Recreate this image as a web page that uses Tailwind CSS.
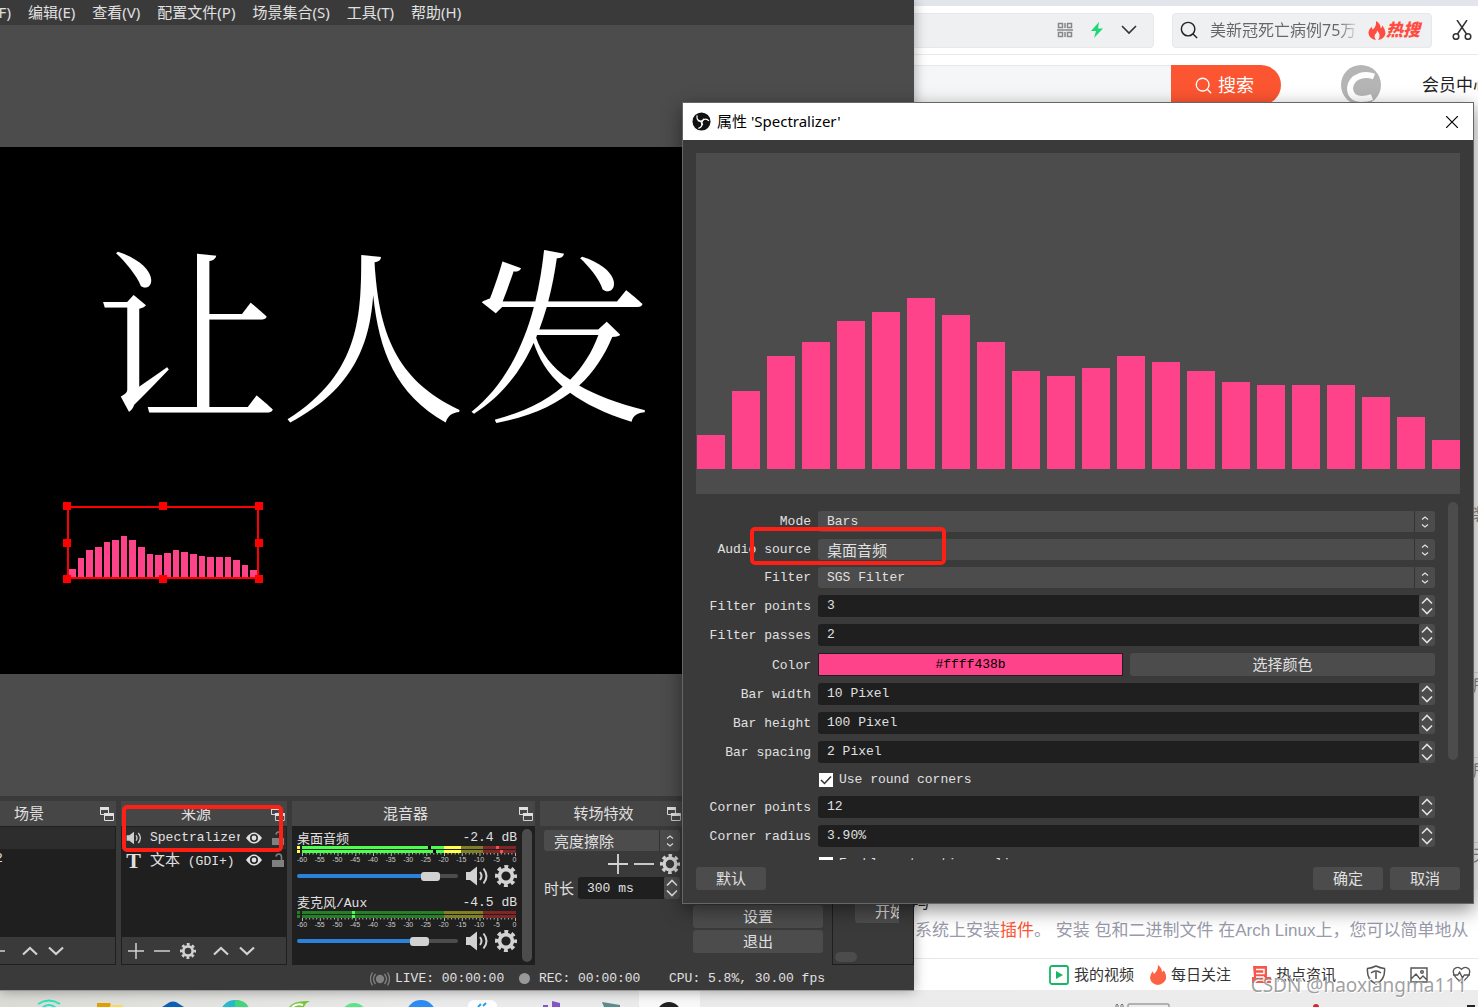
<!DOCTYPE html>
<html lang="zh-CN">
<head>
<meta charset="utf-8">
<title>属性 'Spectralizer'</title>
<script src="https://cdn.jsdelivr.net/npm/@tailwindcss/browser@4"></script>
</head>
<body class="h-screen overflow-hidden bg-white font-['Noto_Sans','Noto_Sans_CJK_SC',sans-serif]">

<svg class="hidden" aria-hidden="true">
  <symbol id="gear" viewBox="0 0 24 24"><g fill="none" stroke="currentColor"><circle cx="12" cy="12" r="7" stroke-width="4"/><circle cx="12" cy="12" r="10" stroke-width="4" stroke-dasharray="4.200 3.654" stroke-dashoffset="2.100"/></g></symbol>
  <symbol id="speaker" viewBox="0 0 24 20"><path fill="currentColor" d="M1 6h4l7-5.500v19L5 14H1z"/><path fill="none" stroke="currentColor" stroke-width="2" d="M15 6q3 4 0 8M18.500 2.500q6 7.500 0 15"/></symbol>
  <symbol id="eye" viewBox="0 0 16 12"><path fill="currentColor" fill-rule="evenodd" d="M0 6Q8-5 16 6Q8 17 0 6zM8 2a4 4 0 1 0 0 8a4 4 0 1 0 0-8z"/><circle cx="8" cy="6" r="2.400" fill="currentColor"/></symbol>
  <symbol id="lock" viewBox="0 0 12 15"><path fill="currentColor" d="M0 7h12v7H0z"/><path fill="none" stroke="currentColor" stroke-width="1.600" d="M4 3.500Q4.500 1 6.500 1Q9.500 1 9.500 4v3"/></symbol>
  <symbol id="float" viewBox="0 0 14 14"><path fill="none" stroke="currentColor" d="M.5 .5h8v7h-8zM4.500 6.500h9v7h-9z"/><path fill="currentColor" d="M0 0h9v3H0zM4 6h10v3H4z"/><path fill="#464646" d="M5 9h8v4H5z"/></symbol>
  <symbol id="up" viewBox="0 0 16 10"><path fill="none" stroke="currentColor" stroke-width="2.200" d="M1 8.500L8 2l7 6.500"/></symbol>
  <symbol id="down" viewBox="0 0 16 10"><path fill="none" stroke="currentColor" stroke-width="2.200" d="M1 1.500L8 8l7-6.500"/></symbol>
  <symbol id="plus" viewBox="0 0 16 16"><path fill="none" stroke="currentColor" stroke-width="1.500" d="M0 8h16M8 0v16"/></symbol>
  <symbol id="minus" viewBox="0 0 16 16"><path fill="none" stroke="currentColor" stroke-width="1.500" d="M0 8h16"/></symbol>
  <symbol id="combo" viewBox="0 0 8 12"><path fill="none" stroke="currentColor" stroke-width="1.200" d="M1 3.500L4 1l3 2.500M1 8.500L4 11l3-2.500"/></symbol>
  <symbol id="spin" viewBox="0 0 12 18"><path fill="none" stroke="currentColor" stroke-width="1.600" d="M1 6.500L6 1.500l5 5M1 11.500l5 5l5-5"/></symbol>
  <symbol id="search" viewBox="0 0 20 20"><g fill="none" stroke="currentColor" stroke-width="1.600"><circle cx="9" cy="9" r="7.500"/><path d="M14.500 14.500L19 19"/></g></symbol>
  <symbol id="flame" viewBox="0 0 18 20"><path fill="currentColor" d="M8 0Q13 3 13 8Q14.500 7 14.500 4.500Q18 9 18 13Q17 19 10 20Q14 15 9 10Q9 13 7 14Q5.500 17 8 20Q1 19 0 13Q0 9 3.500 6Q3.500 8 4.500 9Q8.500 6 8 0z"/></symbol>
  <symbol id="obs" viewBox="0 0 20 20"><circle cx="10" cy="10" r="9.500" fill="#111"/><g fill="none" stroke="#fff" stroke-width="1.300"><path id="blade" d="M5.500 3.500Q4 8 8.500 9.500Q11.500 10 12.500 7"/><use href="#blade" transform="rotate(120 10 10)"/><use href="#blade" transform="rotate(240 10 10)"/></g></symbol>
</svg>

<div class="relative flex h-full flex-col overflow-hidden">

  <!-- Browser behind -->
  <div class="flex min-h-0 flex-1 flex-col bg-white">
    <div class="h-[6px] shrink-0 bg-[#e2e5ea]"></div>
    <header class="flex h-[49px] shrink-0 items-center justify-end border-b border-[#e9eaec]">
      <div class="flex h-[35px] w-[320px] items-center justify-end gap-4 rounded border border-[#e6e8ea] bg-[#eff0f2] pr-4">
        <svg class="h-4 w-4 text-[#888]" viewBox="0 0 16 16" fill="none" stroke="currentColor" stroke-width="1.500"><path d="M1.500 1.500h4v4h-4zM1.500 10.500h4v4h-4zM10.500 1.500h4v4h-4zM10.500 10.500h4v4h-4zM0 8h16M8 1v5M8 10v5"/></svg>
        <svg class="h-4 w-4" viewBox="0 0 16 16"><path fill="#20d776" d="M10 0L2 9h5l-2 7L14 6.500H9z"/></svg>
        <svg class="h-[10px] w-4 text-[#333]" viewBox="0 0 16 10"><path fill="none" stroke="currentColor" stroke-width="1.600" d="M1 1l7 7l7-7"/></svg>
      </div>
      <div class="ml-[18px] mr-5 flex h-[35px] w-[260px] items-center rounded border border-[#e6e8ea] bg-[#eff0f2] px-[7px]">
        <svg class="h-[18px] w-[18px] shrink-0 text-[#222]"><use href="#search"/></svg>
        <input aria-label="搜索热点" value="美新冠死亡病例75万" class="ml-3 w-[150px] bg-transparent bg-clip-text bg-linear-to-r from-[#666] from-85% to-transparent text-base text-transparent">
        <svg class="ml-2 h-[19px] w-[18px] shrink-0 text-[#ff4b40]"><use href="#flame"/></svg>
        <a href="#" class="whitespace-nowrap text-[17px] font-black italic text-[#ff4b40]">热搜</a>
      </div>
      <svg class="mr-[6px] h-5 w-5 shrink-0 text-[#333]" viewBox="0 0 20 20" fill="none" stroke="currentColor" stroke-width="1.500"><circle cx="4" cy="16.500" r="2.800"/><circle cx="16" cy="16.500" r="2.800"/><path d="M5.500 14L15 0M14.500 14L5 0"/></svg>
    </header>
    <div class="mt-[10px] flex h-[40px] shrink-0 items-center justify-end">
      <div class="h-[40px] w-[300px] border-t border-[#e6e7ea] bg-[#f5f6f7]"></div>
      <button class="flex h-[40px] w-[110px] items-center justify-center gap-[6px] rounded-r-full bg-[#fc5531] pr-[3px] text-lg text-white"><svg class="h-[17px] w-[17px]"><use href="#search"/></svg>搜索</button>
      <svg class="ml-[60px] h-10 w-10" viewBox="0 0 40 40"><circle cx="20" cy="20" r="20" fill="#b5b5b5"/><path fill="none" stroke="#fff" stroke-width="6" d="M33 11.500Q26 9 19 11Q10 14 9 23Q9 33 20 34Q26 34 31 32"/></svg>
      <a href="#" class="ml-[41px] w-14 overflow-hidden whitespace-nowrap text-[17px] text-[#222]">会员中心</a>
    </div>
    <main class="flex flex-1 flex-col justify-end overflow-hidden bg-[#fafafa]">
      <aside class="mb-[22px] flex w-[5px] flex-col gap-[60px] self-end overflow-hidden whitespace-nowrap text-base leading-6 text-[#888]">
        <span class="mb-[86px]">装</span><span class="border-t border-[#ddd]">所</span><span class="border-t border-[#ddd]">所</span><span class="border-t border-[#ddd]">天</span>
      </aside>
      <div class="flex flex-col items-end bg-white pb-[13px] font-['Liberation_Sans','Noto_Sans_CJK_SC',sans-serif] text-[17px] leading-7 text-[#999aaa]">
        <div class="w-[566px] text-[#222]">吗</div>
        <p class="w-[563px] overflow-hidden whitespace-nowrap">系统上安装<a href="#" class="text-[#fc5531]">插件</a>。 安装 包和二进制文件 在Arch Linux上，您可以简单地从</p>
      </div>
    </main>
    <nav class="flex h-[32px] shrink-0 items-center justify-end overflow-hidden whitespace-nowrap border-t border-[#e8e8e8] bg-white text-[15px] text-[#333]">
      <a href="#" class="flex items-center gap-[5px]"><svg class="h-5 w-5" viewBox="0 0 20 20"><rect x="1" y="1" width="18" height="18" rx="2" fill="none" stroke="#18b566" stroke-width="1.800"/><path fill="#18b566" d="M7 6l7 4l-7 4z"/></svg>我的视频</a>
      <a href="#" class="ml-4 flex items-center gap-[5px]"><svg class="h-5 w-4" viewBox="0 0 16 20"><path fill="#fb6344" d="M8 0Q12 3 12 7L14 5.500Q17 11 16 14Q14 19 8 20Q1 19 0 13Q0 9 3 6Q3 8 4 9Q8 6 8 0z"/></svg>每日关注</a>
      <a href="#" class="ml-5 flex items-center gap-[5px]"><svg class="h-5 w-5" viewBox="0 0 20 20"><path fill="#f9564b" d="M2 1h14v11h4v6H1V12h2z"/><path stroke="#fff" stroke-width="1.500" fill="none" d="M5 4.500h8v4H5M5 12h8M5 15h4M13 12v5"/></svg>热点资讯</a>
      <span class="ml-[30px] mr-[7px] flex items-center gap-6 text-[#555]">
        <svg class="h-5 w-5" viewBox="0 0 20 20" fill="none" stroke="currentColor" stroke-width="1.500"><path d="M10 1Q14 3 18.500 3.500Q19.500 15 10 19Q.5 15 1.500 3.500Q6 3 10 1zM5 8Q10 4 15 8M10 7v7"/></svg>
        <svg class="h-4 w-[18px]" viewBox="0 0 18 16" fill="none" stroke="currentColor" stroke-width="1.400"><path d="M1 1h16v14H1zM1 12l5-5l4 5l3-3l4 4"/><circle cx="12" cy="5" r="1.300"/></svg>
        <svg class="h-[18px] w-[19px]" viewBox="0 0 20 18" fill="none" stroke="currentColor" stroke-width="1.400"><path d="M10 3Q14-1 18 3Q21 9 10 17Q-1 9 2 3Q6-1 10 3zM1 9h5l2-3l3 6l2-3h6"/></svg>
      </span>
    </nav>
  </div>

  <!-- Taskbar -->
  <footer class="flex h-[17px] shrink-0 justify-between overflow-hidden bg-linear-to-r from-[#dcdcd6] via-[#ebebeb] via-30% to-[#ececec]">
    <svg class="h-[17px] w-[720px] shrink-0" viewBox="0 0 720 17">
      <g fill="none" stroke="#2de3c0" stroke-width="2"><path d="M38 14Q49 7 60 14M42 18Q49 12 56 18"/></g>
      <path fill="#e2a007" d="M97 13h13l2 4H97z"/><path fill="#ffd75e" d="M110 15h13v2h-13z"/>
      <path fill="#0c5fb8" d="M162 17l8-5q3-1 6 0l8 5z"/>
      <circle cx="235" cy="25" r="15" fill="#2bb9d0"/><path fill="#45d67b" d="M235 10q11 0 14 8h-14z"/>
      <path fill="#77c639" d="M289 17Q294 10 310 11Q305 13 304 17z"/><path stroke="#fff" stroke-width="2" fill="none" d="M292 17q5-4 11-2"/>
      <circle cx="354" cy="26" r="13" fill="#55e884"/><circle cx="421" cy="25" r="15" fill="#2f8cf5"/>
      <rect x="468" y="10" width="29" height="20" rx="6" fill="#fff"/><path stroke="#2aa0e8" stroke-width="2" d="M478 17l3-3M483 16l3-3"/>
      <path fill="#8356c4" d="M543 15h5v2h-5zM552 11l8 2v4h-8z"/><path fill="#5c8c8c" d="M602 12l18 3v2h-16z"/>
      <path fill="#f9f9f9" d="M639 0h61v17h-61z"/><circle cx="669" cy="24" r="12" fill="#222"/>
    </svg>
    <svg class="h-[17px] w-[400px] shrink-0" viewBox="0 0 400 17"><path fill="none" stroke="#777" d="M38 17v-2q1-2 2 0v2M43 17v-2q1-2 2 0v2M50 17v-2q0-1 1-1h39q1 0 1 1v2"/><circle cx="238" cy="17" r="3" fill="#d9252b"/><path fill="#222" d="M389 15h8v2h-8z"/></svg>
  </footer>

  <!-- OBS main window -->
  <section class="absolute bottom-4 left-0 top-0 flex w-[914px] flex-col border-b border-[#9a9a9a] bg-[#3a3a3a] text-[#e1e0e1] shadow-[0_0_12px_rgba(0,0,0,0.35)]">
    <nav class="flex h-[25px] shrink-0 items-center gap-[17px] overflow-hidden whitespace-nowrap text-[15px]">
      <a href="#" class="flex w-[11px] justify-end">(F)</a><a href="#">编辑(E)</a><a href="#">查看(V)</a><a href="#">配置文件(P)</a><a href="#">场景集合(S)</a><a href="#">工具(T)</a><a href="#">帮助(H)</a>
    </nav>
    <div class="flex min-h-0 flex-1 flex-col justify-center bg-[#4c4c4c]">
      <div class="relative h-[527px] overflow-hidden bg-black">
        <div class="absolute left-[94px] top-[76px] whitespace-nowrap font-['Noto_Serif_CJK_SC','Noto_Sans_CJK_SC',serif] text-[186px] font-normal leading-[210px] text-white">让人发</div>
        <div class="absolute left-[67px] top-[359px] h-[73px] w-48 border-2 border-[#f00]">
          <div data-bars class="flex h-full items-end gap-[2px]"></div>
          <i class="absolute -left-[6px] -top-[6px] h-2 w-2 bg-[#f00]"></i><i class="absolute left-[90px] -top-[6px] h-2 w-2 bg-[#f00]"></i><i class="absolute -right-[6px] -top-[6px] h-2 w-2 bg-[#f00]"></i>
          <i class="absolute -left-[6px] top-[31px] h-2 w-2 bg-[#f00]"></i><i class="absolute -right-[6px] top-[31px] h-2 w-2 bg-[#f00]"></i>
          <i class="absolute -left-[6px] -bottom-[6px] h-2 w-2 bg-[#f00]"></i><i class="absolute left-[90px] -bottom-[6px] h-2 w-2 bg-[#f00]"></i><i class="absolute -right-[6px] -bottom-[6px] h-2 w-2 bg-[#f00]"></i>
        </div>
      </div>
    </div>

    <div class="flex h-[169px] shrink-0 gap-[5px] pt-[5px] font-['Noto_Sans_CJK_SC',sans-serif] text-[15px]">
      <!-- Scenes -->
      <div class="flex w-[116px] flex-col">
        <h2 class="flex h-[25px] items-center bg-[#464646] pl-[14px] pr-[2px]">场景<svg class="ml-auto h-[14px] w-[14px]"><use href="#float"/></svg></h2>
        <div class="flex flex-1 flex-col border border-l-0 border-[#1f1f1f] bg-[#1f1f1f] font-['Liberation_Mono'] text-[13px]"><div class="h-[22px] bg-[#2d2d2d]"></div><div class="h-[22px] overflow-hidden"><span class="-ml-[5px]">2</span></div>
          <div class="mt-auto flex h-[27px] items-center gap-[10px] bg-[#3a3a3a] text-[#d2d2d2]"><svg class="h-4 w-[5px]" viewBox="0 0 5 16"><path stroke="currentColor" stroke-width="1.500" d="M0 8h5"/></svg><svg class="ml-[7px] h-[10px] w-4"><use href="#up"/></svg><svg class="h-[10px] w-4"><use href="#down"/></svg></div>
        </div>
      </div>
      <!-- Sources -->
      <div class="flex w-[166px] flex-col">
        <h2 class="flex h-[25px] items-center bg-[#464646] pr-[2px]"><span class="w-[152px] text-center">来源</span><svg class="ml-auto h-[14px] w-[14px]"><use href="#float"/></svg></h2>
        <div class="flex flex-1 flex-col border border-[#1f1f1f] bg-[#1f1f1f]">
          <div class="flex h-[22px] items-center bg-[#2d2d2d] pl-1 pr-[2px]"><svg class="h-[14px] w-4 text-[#ccc]"><use href="#speaker"/></svg><span class="ml-2 w-[90px] overflow-hidden font-['Liberation_Mono'] text-[13px] leading-5">Spectralizer</span><svg class="ml-[6px] h-3 w-4"><use href="#eye"/></svg><svg class="ml-auto h-[15px] w-3 text-[#808080]"><use href="#lock"/></svg></div>
          <div class="flex h-[22px] items-center pl-[3px] pr-[2px]"><span class="w-[17px] text-center font-['Liberation_Serif'] text-[22px] font-bold">T</span><span class="ml-2 w-[90px] whitespace-nowrap leading-5">文本<span class="font-['Liberation_Mono'] text-[13px]"> (GDI+)</span></span><svg class="ml-[6px] h-3 w-4"><use href="#eye"/></svg><svg class="ml-auto h-[15px] w-3 text-[#808080]"><use href="#lock"/></svg></div>
          <div class="mt-auto flex h-[27px] items-center gap-[10px] bg-[#3a3a3a] pl-[6px] text-[#d2d2d2]"><svg class="h-4 w-4"><use href="#plus"/></svg><svg class="h-4 w-4"><use href="#minus"/></svg><svg class="h-4 w-4"><use href="#gear"/></svg><svg class="ml-[7px] h-[10px] w-4"><use href="#up"/></svg><svg class="h-[10px] w-4"><use href="#down"/></svg></div>
        </div>
      </div>
      <!-- Mixer -->
      <div class="flex w-[243px] flex-col">
        <h2 class="flex h-[25px] items-center bg-[#464646] pr-[2px]"><span class="w-[229px] text-center">混音器</span><svg class="ml-auto h-[14px] w-[14px]"><use href="#float"/></svg></h2>
        <div class="flex flex-1 justify-between bg-[#1f1f1f] pl-[5px] pr-[3px] pt-[3px]">
          <div class="w-[220px]">
            <div class="h-[65px]">
              <div class="flex h-[17px] items-center justify-between leading-4"><span class="text-[13px]">桌面音频</span><span class="font-['Liberation_Mono'] text-[13px]">-2.4 dB</span></div>
              <svg data-meter="live" class="h-[19px] w-[220px]" viewBox="0 0 220 19">
                <path fill="#ffff4c" d="M0 0h3v3H0zM0 4h3v3H0zM147 0h17v3h-17zM147 4h17v3h-17z"/><path fill="#4cff4c" d="M5 0h142v3H5zM5 4h142v3H5z"/><path fill="#7f7f26" d="M164 0h22v3h-22zM164 4h22v3h-22z"/><path fill="#7f2626" d="M186 0h33v3h-33zM186 4h33v3h-33z"/><path d="M131 0h3v3h-3zM136 4h3v3h-3z"/><path fill="#ff4c4c" d="M199 0h3v3h-3zM203 4h3v3h-3z"/>
              </svg>
              <div class="flex h-[22px] items-center justify-between"><div class="relative flex h-2 w-[161px] items-center"><span class="h-1 w-full rounded-full bg-linear-to-r from-[#2a82da] from-80% to-[#4c4c4c] to-80%"></span><input type="range" aria-label="桌面音频" value="85" class="absolute inset-0 w-full opacity-0"><span class="absolute left-[124px] h-[9px] w-[19px] rounded-[3px] bg-[#d2d2d2]"></span></div><svg class="h-5 w-6 text-[#d2d2d2]"><use href="#speaker"/></svg><svg class="h-[22px] w-[22px] text-[#d2d2d2]"><use href="#gear"/></svg></div>
            </div>
            <div class="h-[65px]">
              <div class="flex h-[17px] items-center justify-between leading-4"><span class="text-[13px]">麦克风<span class="font-['Liberation_Mono']">/Aux</span></span><span class="font-['Liberation_Mono'] text-[13px]">-4.5 dB</span></div>
              <svg data-meter="idle" class="h-[19px] w-[220px]" viewBox="0 0 220 19">
                <path fill="#267f26" d="M0 0h3v3H0zM0 4h3v3H0zM5 0h142v3H5zM5 4h142v3H5z"/><path fill="#7f7f26" d="M147 0h39v3h-39zM147 4h39v3h-39z"/><path fill="#7f2626" d="M186 0h33v3h-33zM186 4h33v3h-33z"/><path fill="#4cff4c" d="M55 0h3v3h-3zM55 4h3v3h-3z"/>
              </svg>
              <div class="flex h-[22px] items-center justify-between"><div class="relative flex h-2 w-[161px] items-center"><span class="h-1 w-full rounded-full bg-linear-to-r from-[#2a82da] from-75% to-[#4c4c4c] to-75%"></span><input type="range" aria-label="麦克风" value="78" class="absolute inset-0 w-full opacity-0"><span class="absolute left-[113px] h-[9px] w-[19px] rounded-[3px] bg-[#d2d2d2]"></span></div><svg class="h-5 w-6 text-[#d2d2d2]"><use href="#speaker"/></svg><svg class="h-[22px] w-[22px] text-[#d2d2d2]"><use href="#gear"/></svg></div>
            </div>
          </div>
          <div class="mb-[3px] w-[10px] rounded-full bg-[#4c4c4c]"></div>
        </div>
      </div>
      <!-- Transitions -->
      <div class="flex w-[148px] flex-col">
        <h2 class="flex h-[25px] items-center bg-[#464646] pr-[7px]"><span class="w-[129px] text-center">转场特效</span><svg class="ml-auto h-[14px] w-[14px]"><use href="#float"/></svg></h2>
        <div class="flex flex-col px-1 pt-1">
          <div class="relative w-[136px]"><select aria-label="转场特效" class="block h-[21px] w-full appearance-none rounded-[3px] bg-[#4c4c4c] pl-[10px] leading-5"><option>亮度擦除</option></select><span class="pointer-events-none absolute inset-y-0 right-0 flex w-[21px] items-center justify-center border-l border-[#333]"><svg class="h-3 w-2"><use href="#combo"/></svg></span></div>
          <div class="flex h-[26px] w-[136px] items-center justify-end gap-[6px] text-[#d2d2d2]"><svg class="h-5 w-5"><use href="#plus"/></svg><svg class="h-5 w-5"><use href="#minus"/></svg><svg class="h-5 w-5"><use href="#gear"/></svg></div>
          <label class="flex h-[22px] w-[136px] items-center"><span class="w-[34px] whitespace-nowrap">时长</span><input value="300 ms" class="h-[22px] w-[86px] rounded-l-[3px] bg-[#1f1f1f] pl-[9px] font-['Liberation_Mono'] text-[13px]"><span class="flex h-[22px] w-4 items-center justify-center rounded-[3px] bg-[#4c4c4c]"><svg class="h-[18px] w-3"><use href="#spin"/></svg></span></label>
        </div>
      </div>
      <!-- Controls -->
      <div class="flex w-[130px] flex-col justify-end gap-[2px] pb-3"><button class="h-[23px] rounded-[3px] bg-[#4c4c4c]">设置</button><button class="h-[23px] rounded-[3px] bg-[#4c4c4c]">退出</button></div>
      <div class="ml-1 flex flex-1 flex-col justify-end border border-[#1f1f1f] pb-[2px]"><button class="ml-[22px] h-[23px] w-11 overflow-hidden whitespace-nowrap rounded-l-[3px] bg-[#4c4c4c] pl-5 text-left">开始</button><div class="ml-[2px] mt-[29px] h-[10px] w-[22px] rounded-full bg-[#4c4c4c]"></div></div>
    </div>

    <div class="flex h-[25px] shrink-0 items-center pl-[370px] pt-[2px] font-['Liberation_Mono'] text-[13px] whitespace-pre">
      <svg class="h-4 w-[20px] text-[#808080]" viewBox="0 0 20 16" fill="none" stroke="currentColor" stroke-width="1.300"><circle cx="10" cy="8" r="3.500" fill="currentColor"/><path d="M5.500 3q-4 5 0 10M2.500 1.500q-4 6.500 0 13M14.500 3q4 5 0 10M17.500 1.500q4 6.500 0 13"/></svg><span class="ml-[5px] w-[124px]">LIVE: 00:00:00</span><i class="h-[11px] w-[11px] rounded-full bg-[#999]"></i><span class="ml-[9px] w-[130px]">REC: 00:00:00</span><span>CPU: 5.8%, 30.00 fps</span>
    </div>
  </section>

  <!-- Properties dialog -->
  <section role="dialog" aria-labelledby="dlg" class="absolute right-1 top-[102px] flex w-[792px] flex-col border border-[#666] bg-[#3a3a3a] text-[#e1e0e1] shadow-[0_6px_18px_rgba(0,0,0,0.45)]">
    <header class="flex h-[37px] items-center bg-white pl-[9px] pr-[15px] text-black"><svg class="h-[19px] w-[19px]"><use href="#obs"/></svg><h1 id="dlg" class="ml-[6px] text-[15px]">属性 'Spectralizer'</h1><button aria-label="关闭" class="ml-auto"><svg class="h-3 w-3" viewBox="0 0 12 12"><path stroke="#000" stroke-width="1.200" d="M0 0l12 12M12 0L0 12"/></svg></button></header>
    <div class="flex flex-col px-[13px] py-[13px] font-['Noto_Sans_CJK_SC',sans-serif] text-[15px]">
      <div class="h-[341px] bg-[#4c4c4c]"><div data-bars class="flex h-[316px] items-end gap-[7px] pl-px"></div></div>
      <div class="flex h-[366px] justify-between overflow-hidden pr-[2px]">
        <form id="props" class="grid flex-1 grid-cols-[115px_1fr] content-start gap-x-[7px] gap-y-[7px] pr-[13px] pt-[17px] font-['Liberation_Mono',monospace] text-[13px]"></form>
        <div class="mt-2 h-[258px] w-[10px] rounded-full bg-[#4c4c4c]"></div>
      </div>
      <div class="mt-[7px] flex gap-[7px]"><button class="mr-auto h-[23px] w-[70px] rounded-[3px] bg-[#4c4c4c]">默认</button><button class="h-[23px] w-[70px] rounded-[3px] bg-[#4c4c4c]">确定</button><button class="h-[23px] w-[70px] rounded-[3px] bg-[#4c4c4c]">取消</button></div>
    </div>
  </section>

  <!-- Highlight annotations -->
  <div class="absolute right-[532px] top-[527px] h-[38px] w-[196px] rounded-[5px] border-4 border-[#ff2015]"></div>
  <div class="absolute bottom-[155px] left-[122px] h-[47px] w-[161px] rounded-[5px] border-4 border-[#ff2015]"></div>
  <div class="absolute bottom-2 right-[11px] whitespace-nowrap text-[19px] leading-7 text-[#888]/80 [text-shadow:1px_1px_0_#fff]">CSDN @haoxiangma111</div>
</div>

<script>
  const heights = [34, 78, 113, 127, 148, 157, 171, 154, 127, 98, 93, 101, 113, 107, 98, 87, 84, 84, 84, 72, 52, 29];
  document.querySelectorAll('[data-bars]').forEach((box, i) => {
    const full = i === 0 ? 290 : 316;
    box.innerHTML = heights.map(h => `<div class="flex-1 bg-[#ff438b]" style="height:${(h / full * 100).toFixed(1)}%"></div>`).join('');
  });

  document.querySelectorAll('[data-meter]').forEach(svg => {
    let s = '';
    for (let i = 0; i <= 60; i++) s += `<path stroke="#ddd" stroke-width=".8" d="M${(5.500 + i * 3.550).toFixed(1)} 7v${i % 5 ? 1.5 : 3}"/>`;
    for (let i = 0; i <= 12; i++) s += `<text x="${(5 + i * 17.700).toFixed(1)}" y="16" text-anchor="middle" font-size="7" font-family="Liberation Sans" fill="#ccc">${i * 5 - 60}</text>`;
    svg.innerHTML += s;
  });

  const label = (id, t) => `<label for="${id}" class="self-end whitespace-nowrap text-right leading-5">${t}</label>`;
  const combo = (id, t, v, cls) => label(id, t) + `<div class="relative"><select id="${id}" class="block h-[21px] w-full appearance-none rounded-[3px] bg-[#4c4c4c] pl-[9px] ${cls || ''}"><option>${v}</option></select><span class="pointer-events-none absolute inset-y-0 right-0 flex w-[21px] items-center justify-center border-l border-[#333]"><svg class="h-3 w-2"><use href="#combo"/></svg></span></div>`;
  const spin = (id, t, v) => label(id, t) + `<div class="flex h-[22px]"><input id="${id}" value="${v}" class="min-w-0 flex-1 rounded-l-[3px] bg-[#1f1f1f] pl-[9px]"><span class="flex w-4 items-center justify-center rounded-[3px] bg-[#4c4c4c]"><svg class="h-[18px] w-3"><use href="#spin"/></svg></span></div>`;
  const check = (id, t) => `<span></span><div class="flex h-[19px] items-center gap-[6px]"><span class="relative ml-px h-[14px] w-[14px]"><input id="${id}" type="checkbox" checked class="block h-[14px] w-[14px] appearance-none bg-white"><svg class="pointer-events-none absolute inset-0 h-[14px] w-[14px]" viewBox="0 0 14 14"><path fill="none" stroke="#333" stroke-width="1.500" d="M2 7l3.500 3.500L12 3.500"/></svg></span><label for="${id}">${t}</label></div>`;
  document.getElementById('props').innerHTML =
    combo('mode', 'Mode', 'Bars') + combo('src', 'Audio source', '桌面音频', "font-['Noto_Sans_CJK_SC'] text-[15px]") + combo('filter', 'Filter', 'SGS Filter') +
    spin('fpt', 'Filter points', '3') + spin('fps', 'Filter passes', '2') +
    label('color', 'Color') + `<div class="grid h-[23px] grid-cols-2 gap-[7px]"><input id="color" readonly value="#ffff438b" class="min-w-0 border border-[#1f1f1f] bg-[#ff438b] text-center text-black"><button type="button" class="rounded-[3px] bg-[#4c4c4c] font-['Noto_Sans_CJK_SC'] text-[15px]">选择颜色</button></div>` +
    spin('bw', 'Bar width', '10 Pixel') + spin('bh', 'Bar height', '100 Pixel') + spin('bs', 'Bar spacing', '2 Pixel') +
    check('round', 'Use round corners') + spin('cp', 'Corner points', '12') + spin('cr', 'Corner radius', '3.90%') + check('auto', 'Enable automatic scaling');
</script>
</body>
</html>
